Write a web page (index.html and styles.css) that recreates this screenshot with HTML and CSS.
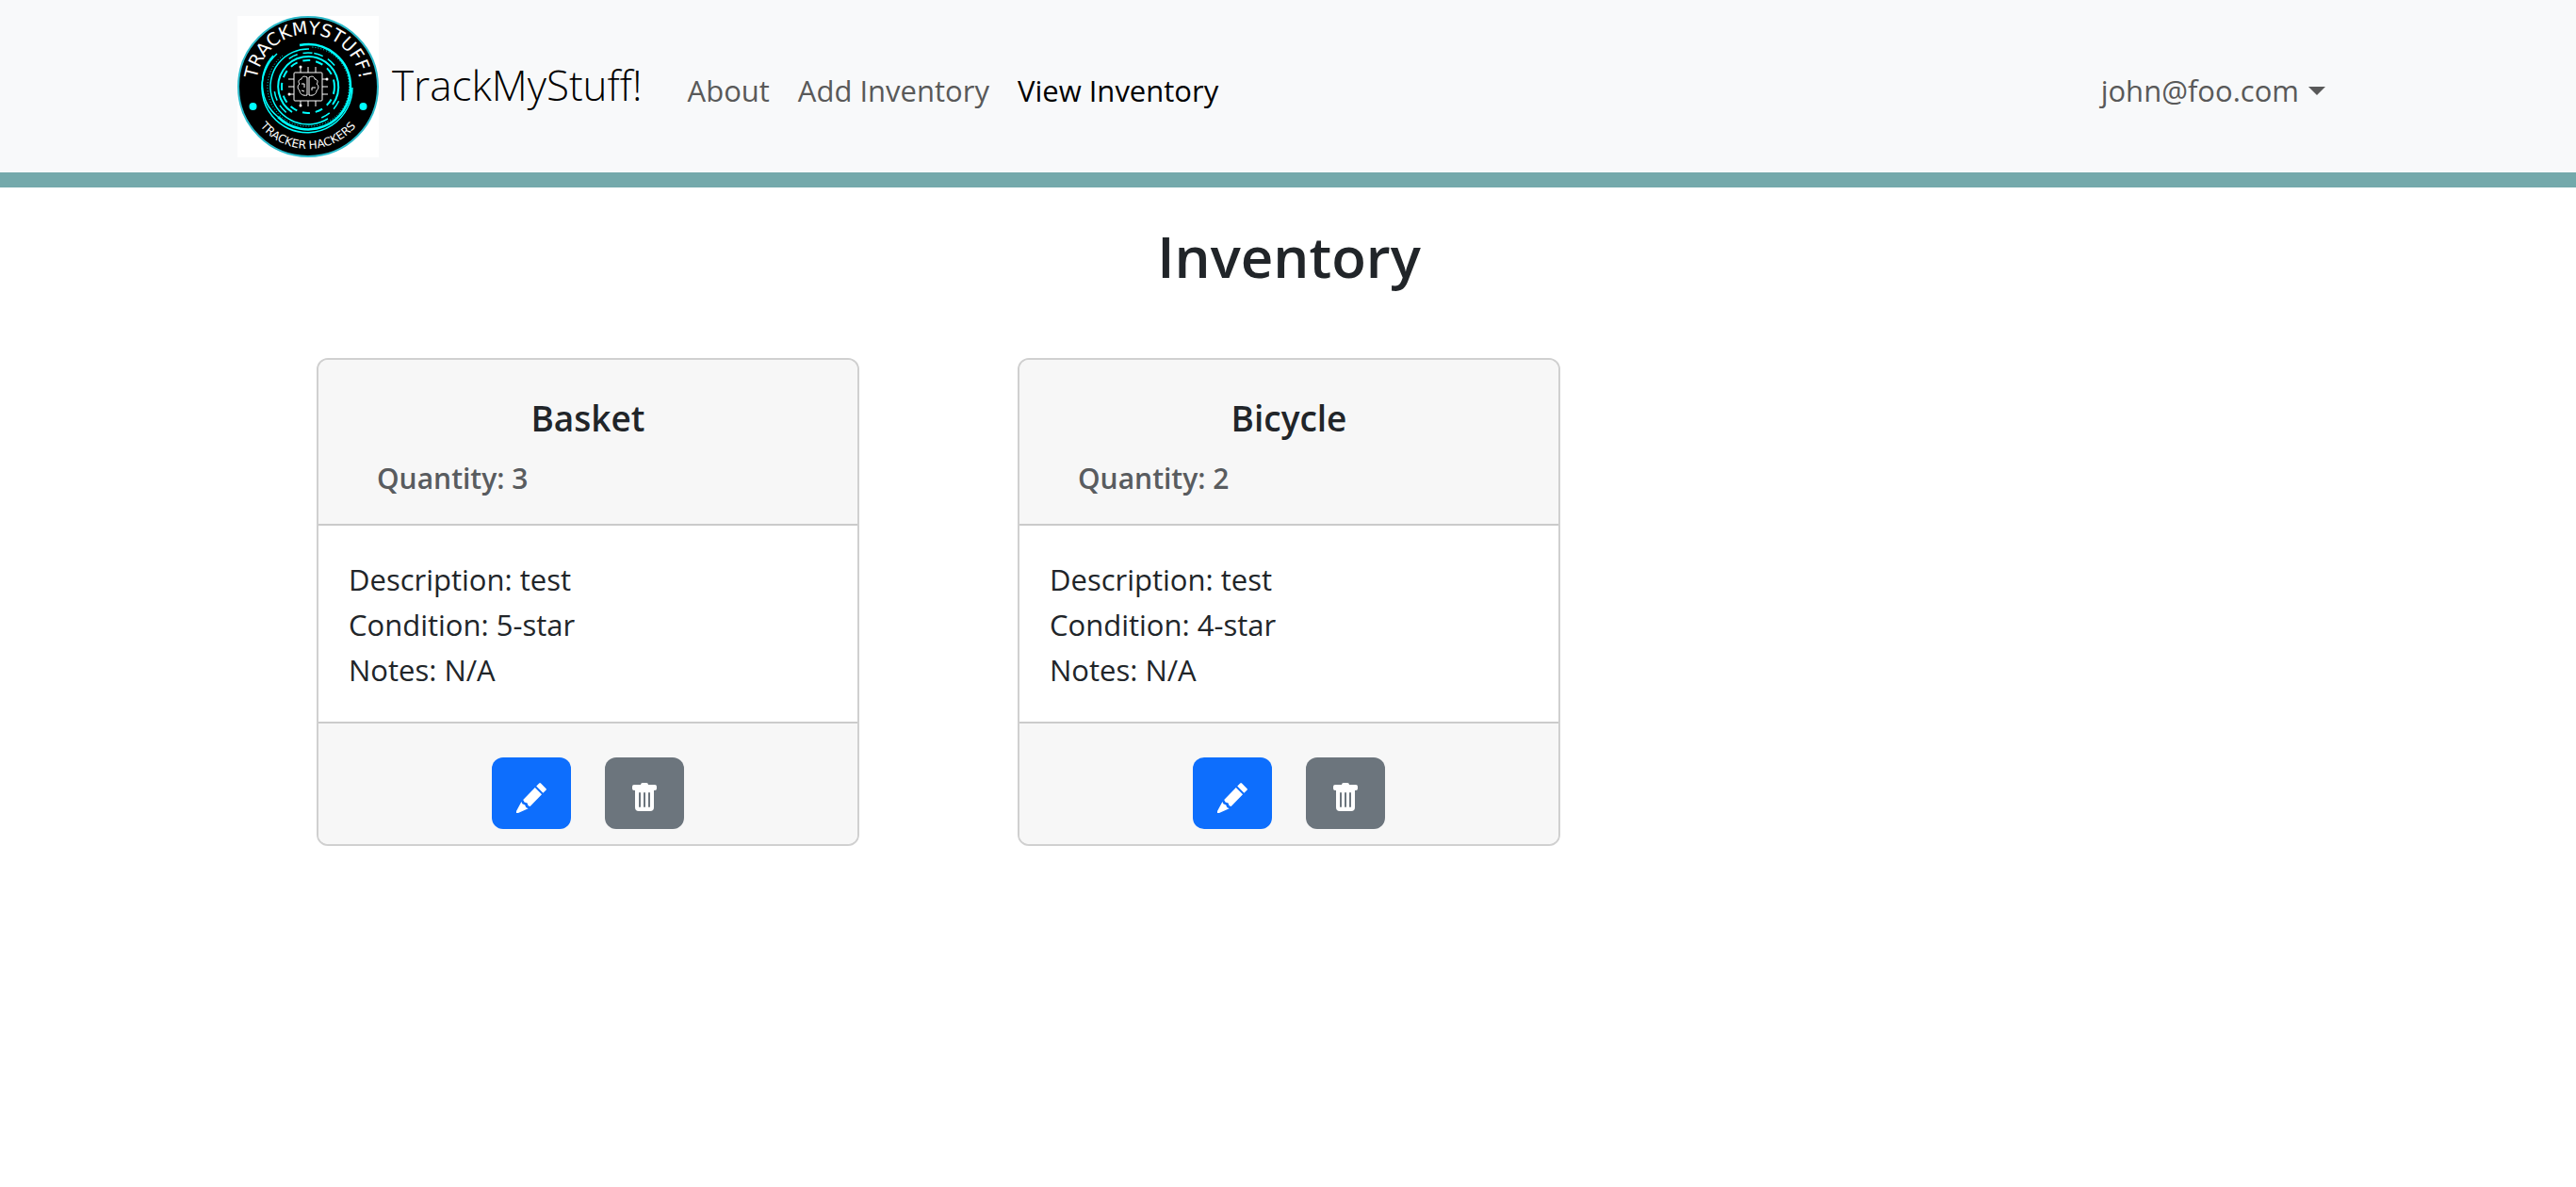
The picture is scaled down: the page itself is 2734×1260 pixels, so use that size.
FILE: index.html
```html
<!DOCTYPE html>
<html lang="en">
<head>
<meta charset="utf-8">
<title>TrackMyStuff!</title>
<link rel="stylesheet" href="styles.css">
</head>
<body>
<svg class="sprite" aria-hidden="true">
  <symbol id="pencil" viewBox="0 0 32 32">
    <path d="M24.200 .6a1.200 1.200 0 0 1 1.800 0l5.400 5.400a1.200 1.200 0 0 1 0 1.800l-3 3-7.200-7.200zM19.800 5l7.200 7.200L14.600 25l-2-.8-1-2.600-3-1-1.400-2.600zM5.400 20l1 2.200 2.800 1.200 1 2.600 2.400 1.200L2 32H0v-2z"/>
  </symbol>
  <symbol id="trash" viewBox="0 0 16 16">
    <path d="M2.500 1a1 1 0 0 0-1 1v1a1 1 0 0 0 1 1H3v9a2 2 0 0 0 2 2h6a2 2 0 0 0 2-2V4h.5a1 1 0 0 0 1-1V2a1 1 0 0 0-1-1H10a1 1 0 0 0-1-1H7a1 1 0 0 0-1 1zm3 4a.5.5 0 0 1 .5.500v7a.5.5 0 0 1-1 0v-7a.5.5 0 0 1 .5-.5M8 5a.5.5 0 0 1 .5.500v7a.5.5 0 0 1-1 0v-7A.5.5 0 0 1 8 5m3 .5v7a.5.5 0 0 1-1 0v-7a.5.5 0 0 1 1 0"/>
  </symbol>
</svg>
<header class="navbar">
  <div class="container navbar-inner">
    <a class="brand" href="#">
      <svg class="logo" viewBox="0 0 150 150" role="img" aria-label="Tracker Hackers logo">
        <defs>
          <path id="arc-top" d="M22 89A55 55 0 1 1 128 89"/>
          <path id="arc-bottom" d="M9 75A66 66 0 0 0 141 75"/>
        </defs>
        <rect width="150" height="150" fill="#fff"/>
        <circle cx="75" cy="75" r="74" fill="#000" stroke="#2bb9c9" stroke-width="2"/>
        <g fill="none" stroke="#0ff">
          <path d="M42 40A48 48 0 1 0 122 76" stroke-width="1.500"/>
          <path d="M76 35A40 40 0 1 0 96 109" stroke-width="1.500"/>
          <path d="M66 31A45 45 0 0 1 120 75A45 45 0 0 1 43 107" stroke-width="2.500"/>
          <path d="M38 42A45 45 0 0 0 43 107" stroke-width="1.500"/>
          <path d="M48 42A42 42 0 0 0 75 117A42 42 0 0 0 78 33" stroke-width="1" stroke-dasharray="1 2"/>
          <circle cx="75" cy="75" r="36" stroke-width="1.500" stroke-dasharray="10 6 10 40" transform="rotate(-80 75 75)"/>
          <path d="M58 102A32 32 0 1 1 101 94" stroke-width="2"/>
          <circle cx="75" cy="75" r="28" stroke-width="2" stroke-dasharray="8 6"/>
        </g>
        <g fill="none" stroke="#fff" stroke-width="1">
          <rect x="60" y="60" width="30" height="30" rx="1"/>
          <path d="M67 60v-6M75 60v-6M83 60v-6M67 90v5M75 90v6M83 90v6M60 67h-6M60 75h-6M60 83h-5M90 67h5M90 75h6M90 83h6"/>
          <path d="M74 65c-4-2-6 0-6 2-3 0-4 3-2 5-3 2-2 6 0 7 0 4 4 6 8 5zM76 65c4-2 6 0 6 2 3 0 4 3 2 5 3 2 2 6 0 7 0 4-4 6-8 5z"/>
          <path d="M68 72h3v4M79 79v-3h4M68 79l3 1"/>
        </g>
        <g fill="#fff">
          <circle cx="67" cy="54" r="1.500"/>
          <circle cx="67" cy="95" r="1.500"/>
          <circle cx="55" cy="83" r="1.500"/>
          <circle cx="95" cy="67" r="1.500"/>
        </g>
        <circle cx="16.500" cy="96" r="4" fill="#0ff"/>
        <circle cx="133.500" cy="96" r="4" fill="#0ff"/>
        <g class="logo-text">
          <text font-size="19"><textPath href="#arc-top" startOffset="50%" text-anchor="middle">TRACKMYSTUFF!</textPath></text>
          <text font-size="12"><textPath href="#arc-bottom" startOffset="50%" text-anchor="middle">TRACKER HACKERS</textPath></text>
        </g>
      </svg>
      <span class="brand-name">TrackMyStuff!</span>
    </a>
    <nav class="nav">
      <a class="nav-link" href="#">About</a>
      <a class="nav-link" href="#">Add Inventory</a>
      <a class="nav-link active" href="#" aria-current="page">View Inventory</a>
    </nav>
    <button class="nav-link user-menu" type="button" aria-haspopup="true">john@foo.com<span class="caret"></span></button>
  </div>
</header>
<main class="container">
  <h1 class="page-title">Inventory</h1>
  <div class="card-grid">
    <article class="card">
      <div class="card-header">
        <h2 class="card-title">Basket</h2>
        <p class="card-subtitle">Quantity: 3</p>
      </div>
      <div class="card-body">
        <p>Description: test</p>
        <p>Condition: 5-star</p>
        <p>Notes: N/A</p>
      </div>
      <div class="card-footer">
        <button class="btn btn-edit" type="button" aria-label="Edit Basket"><svg class="icon"><use href="#pencil"/></svg></button>
        <button class="btn btn-delete" type="button" aria-label="Delete Basket"><svg class="icon"><use href="#trash"/></svg></button>
      </div>
    </article>
    <article class="card">
      <div class="card-header">
        <h2 class="card-title">Bicycle</h2>
        <p class="card-subtitle">Quantity: 2</p>
      </div>
      <div class="card-body">
        <p>Description: test</p>
        <p>Condition: 4-star</p>
        <p>Notes: N/A</p>
      </div>
      <div class="card-footer">
        <button class="btn btn-edit" type="button" aria-label="Edit Bicycle"><svg class="icon"><use href="#pencil"/></svg></button>
        <button class="btn btn-delete" type="button" aria-label="Delete Bicycle"><svg class="icon"><use href="#trash"/></svg></button>
      </div>
    </article>
  </div>
</main>
</body>
</html>
```
FILE: styles.css
```css
* { box-sizing: border-box; }

body {
  margin: 0;
  background: #fff;
  color: #212529;
  font-family: "Open Sans", "Noto Sans", sans-serif;
  font-size: 31px;
  line-height: 48px;
}

h1, h2, p { margin: 0; }

.sprite { display: none; }

.container {
  width: 100%;
  max-width: 2280px;
  margin: 0 auto;
  padding: 0 23px 0 25px;
}

.navbar {
  background: #f8f9fa;
  border-bottom: 16px solid #74a9ab;
}

.navbar-inner {
  display: flex;
  align-items: center;
  padding-top: 17px;
  padding-bottom: 16px;
}

.brand {
  display: flex;
  align-items: center;
  gap: 14px;
  margin-right: 48px;
  color: #000;
  text-decoration: none;
}

.logo {
  display: block;
  width: 150px;
  height: 150px;
}

.logo-text {
  fill: #fff;
  font-family: "DejaVu Sans", sans-serif;
}

.brand-name {
  padding-bottom: 4px;
  font-size: 44px;
  font-weight: 300;
  line-height: 60px;
}

.nav {
  display: flex;
  flex: 1;
  gap: 30px;
}

.nav-link {
  padding: 8px 0 0;
  border: 0;
  background: none;
  color: #595959;
  font: inherit;
  text-decoration: none;
}

.nav-link.active { color: #000; }

.user-menu {
  display: flex;
  align-items: center;
  gap: 10px;
  margin-right: 16px;
}

.caret {
  border: 9px solid transparent;
  border-top-color: currentColor;
  border-bottom: 0;
}

.page-title {
  padding: 33px 0 68px;
  font-size: 60px;
  font-weight: 600;
  line-height: 80px;
  text-align: center;
}

.card-grid {
  display: grid;
  grid-template-columns: repeat(3, 1fr);
  justify-items: center;
}

.card {
  width: 100%;
  max-width: 576px;
  overflow: hidden;
  border: 2px solid #d0d0d0;
  border-radius: 12px;
}

.card-header {
  padding: 38px 32px 24px;
  border-bottom: 2px solid #cbcbcb;
  background: #f7f7f7;
}

.card-title {
  margin-bottom: 16px;
  font-size: 37px;
  font-weight: 600;
  line-height: 48px;
  text-align: center;
}

.card-subtitle {
  padding-left: 30px;
  color: #595c5f;
  font-size: 30px;
  font-weight: 600;
}

.card-body { padding: 33px 32px 31px; }

.card-footer {
  display: flex;
  justify-content: center;
  gap: 36px;
  padding: 36px 32px 16px;
  border-top: 2px solid #cbcbcb;
  background: #f7f7f7;
}

.btn {
  width: 84px;
  height: 76px;
  padding: 10px 0 0;
  border: 0;
  border-radius: 12px;
  color: #fff;
  cursor: pointer;
}

.btn-edit { background: #0d6efd; }
.btn-delete { background: #6c757d; }

.icon {
  display: block;
  width: 32px;
  height: 32px;
  margin: 0 auto;
  fill: currentColor;
}
```
